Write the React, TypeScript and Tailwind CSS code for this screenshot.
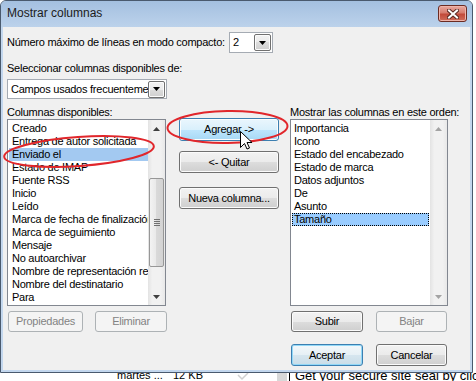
import React from "react";

const leftItems = [
  "Creado",
  "Entrega de autor solicitada",
  "Enviado el",
  "Estado de IMAP",
  "Fuente RSS",
  "Inicio",
  "Leído",
  "Marca de fecha de finalización",
  "Marca de seguimiento",
  "Mensaje",
  "No autoarchivar",
  "Nombre de representación remitente",
  "Nombre del destinatario",
  "Para",
];

const rightItems = [
  "Importancia",
  "Icono",
  "Estado del encabezado",
  "Estado de marca",
  "Datos adjuntos",
  "De",
  "Asunto",
  "Tamaño",
];

type Kind = "normal" | "disabled" | "hover" | "default";

const kinds: Record<Kind, string> = {
  normal:
    "border-[#707070] text-black bg-[linear-gradient(to_bottom,#f2f2f2_0%,#ebebeb_50%,#dddddd_50%,#cfcfcf_100%)] shadow-[inset_0_0_0_1px_#fbfbfb]",
  disabled: "border-[#adb2b5] text-[#838383] bg-[#f4f4f4]",
  hover:
    "border-[#3c7fb1] text-black bg-[linear-gradient(to_bottom,#eaf6fd_0%,#d9f0fc_50%,#bee6fd_50%,#a7d9f5_100%)] shadow-[inset_0_0_0_1px_#fcfcfc]",
  default:
    "border-[#3c7fb1] text-black bg-[linear-gradient(to_bottom,#f3f8fb_0%,#e6f0f5_50%,#d6e6ef_50%,#c9dde8_100%)] shadow-[inset_0_0_0_1px_#92d8f7]",
};

function Btn({
  kind = "normal",
  className = "",
  children,
}: {
  kind?: Kind;
  className?: string;
  children: React.ReactNode;
}) {
  return (
    <div
      className={`flex items-center justify-center rounded-[3px] border leading-[13px] ${kinds[kind]} ${className}`}
    >
      {children}
    </div>
  );
}

function Tri({ up, fill }: { up?: boolean; fill: string }) {
  return (
    <svg width="7" height="4" viewBox="0 0 7 4">
      <path d={up ? "M0 4 L3.5 0 L7 4 Z" : "M0 0 L7 0 L3.5 4 Z"} fill={fill} />
    </svg>
  );
}

function DropBtn() {
  return (
    <div className="flex h-[17px] w-[17px] items-center justify-center rounded-[2px] border border-[#707070] bg-[linear-gradient(to_bottom,#f2f2f2_0%,#ebebeb_50%,#dddddd_50%,#cfcfcf_100%)] shadow-[inset_0_0_0_1px_#fbfbfb]">
      <Tri fill="#000" />
    </div>
  );
}

function ScrollLeft() {
  return (
    <div className="flex w-[17px] flex-col bg-[linear-gradient(to_right,#e3e3e3,#f1f1f1_25%,#f1f1f1_75%,#e8e8e8)]">
      <div className="flex h-[17px] items-center justify-center">
        <Tri up fill="#3f3f3f" />
      </div>
      <div className="flex-1">
        <div className="mx-[1px] mt-[41px] flex h-[89px] items-center justify-center rounded-[2px] border border-[#979797] bg-[linear-gradient(to_right,#f3f3f3,#e8e8e8_50%,#d9d9d9_50%,#d3d3d3)]">
          <div className="flex flex-col gap-[1px]">
            <div className="h-[1px] w-[6px] bg-[#707070]" />
            <div className="h-[1px] w-[6px] bg-[#707070]" />
            <div className="h-[1px] w-[6px] bg-[#707070]" />
            <div className="h-[1px] w-[6px] bg-[#707070]" />
          </div>
        </div>
      </div>
      <div className="flex h-[17px] items-center justify-center">
        <Tri fill="#3f3f3f" />
      </div>
    </div>
  );
}

function ScrollRight() {
  return (
    <div className="flex w-[17px] flex-col bg-[linear-gradient(to_right,#e3e3e3,#f1f1f1_25%,#f1f1f1_75%,#e8e8e8)]">
      <div className="flex h-[17px] items-center justify-center">
        <Tri up fill="#a3a3a3" />
      </div>
      <div className="flex-1" />
      <div className="flex h-[17px] items-center justify-center">
        <Tri fill="#a3a3a3" />
      </div>
    </div>
  );
}

export default function App() {
  return (
    <div className="relative h-[381px] w-[476px] overflow-hidden bg-white font-['Liberation_Sans',Arial,sans-serif] text-[11px] text-black">
      {/* dialog */}
      <div className="flex h-[373px] w-[473px] flex-col overflow-hidden rounded-t-[6px] border border-[#4a5a6e] bg-[#c3d7ee]">
        <div className="flex h-[26px] items-start bg-[linear-gradient(to_bottom,#a4c0e0,#bcd2eb)]">
          <span className="flex-1 pl-[6px] pt-[4px] text-[12px] leading-[16px] text-[#1b1b1b]">
            Mostrar columnas
          </span>
          <div className="mr-[5px] mt-[4px] flex h-[17px] w-[29px] items-center justify-center rounded-[3px] border border-[#6b2b22] bg-[linear-gradient(to_bottom,#e8a99f_0%,#d77d6f_45%,#c24a3a_55%,#cf6d5b_100%)] shadow-[inset_0_0_0_1px_#eeb4aa]">
            <svg width="12" height="10" viewBox="0 0 12 10">
              <path d="M2 1.5 L10 8.5 M10 1.5 L2 8.5" stroke="#5a2a24" strokeWidth="4" strokeLinecap="square" />
              <path d="M2 1.5 L10 8.5 M10 1.5 L2 8.5" stroke="#ffffff" strokeWidth="2" strokeLinecap="square" />
            </svg>
          </div>
        </div>

        <div className="mx-[2px] mb-[2px] flex flex-1 flex-col bg-[#f0f0f0] pl-[4px] pt-[5px] tracking-[-0.25px]">
          <div className="flex h-[21px] items-center">
            <span className="w-[222px] leading-[13px]">Número máximo de líneas en modo compacto:</span>
            <div className="flex h-[21px] w-[44px] items-center border border-[#a5abb3] bg-white pl-[3px] pr-[1px]">
              <span className="flex-1 leading-[13px]">2</span>
              <DropBtn />
            </div>
          </div>

          <div className="mt-[9px] leading-[13px]">Seleccionar columnas disponibles de:</div>

          <div className="mt-[4px] flex h-[20px] w-[160px] items-center border border-[#a5abb3] bg-white pl-[3px] pr-[1px]">
            <span className="min-w-0 flex-1 overflow-hidden whitespace-nowrap leading-[13px]">
              Campos usados frecuentemente
            </span>
            <DropBtn />
          </div>

          <div className="mt-[7px] flex">
            {/* left column */}
            <div className="flex w-[159px] flex-col">
              <div className="h-[13px] leading-[13px]">Columnas disponibles:</div>
              <div className="flex h-[187px] border border-[#828790] bg-white">
                <div className="min-w-0 flex-1 pl-[1px] pt-[2px]">
                  {leftItems.map((t, i) => (
                    <div
                      key={t}
                      className={`h-[13px] overflow-hidden whitespace-nowrap pl-[3px] leading-[13px] ${i === 2 ? "bg-[#a3c9f1]" : ""}`}
                    >
                      {t}
                    </div>
                  ))}
                </div>
                <ScrollLeft />
              </div>
            </div>

            {/* middle buttons */}
            <div className="ml-[13px] flex w-[100px] flex-col pt-[12px]">
              <Btn kind="hover" className="h-[23px]">
                Agregar -&gt;
              </Btn>
              <Btn className="mt-[10px] h-[22px]">&lt;- Quitar</Btn>
              <Btn className="mt-[14px] h-[22px]">Nueva columna...</Btn>
            </div>

            {/* right column */}
            <div className="ml-[11px] flex w-[158px] flex-col">
              <div className="h-[13px] whitespace-nowrap leading-[13px]">
                Mostrar las columnas en este orden:
              </div>
              <div className="flex h-[187px] border border-[#828790] bg-white">
                <div className="min-w-0 flex-1 px-[1px] pt-[2px]">
                  {rightItems.map((t, i) => (
                    <div
                      key={t}
                      className={`h-[13px] overflow-hidden whitespace-nowrap leading-[11px] ${
                        i === rightItems.length - 1
                          ? "border border-dotted border-black bg-[#99ccff] pl-[1px]"
                          : "pl-[2px] leading-[13px]"
                      }`}
                    >
                      {t}
                    </div>
                  ))}
                </div>
                <ScrollRight />
              </div>
            </div>
          </div>

          <div className="mt-[5px] flex h-[21px]">
            <Btn kind="disabled" className="ml-[1px] w-[75px]">
              Propiedades
            </Btn>
            <Btn kind="disabled" className="ml-[12px] w-[72px]">
              Eliminar
            </Btn>
            <Btn className="ml-[124px] w-[72px]">Subir</Btn>
            <Btn kind="disabled" className="ml-[13px] w-[71px]">
              Bajar
            </Btn>
          </div>

          <div className="mt-[12px] flex h-[22px]">
            <Btn kind="default" className="ml-[284px] w-[72px]">
              Aceptar
            </Btn>
            <Btn className="ml-[13px] w-[71px]">Cancelar</Btn>
          </div>
        </div>
      </div>

      {/* page behind the dialog */}
      <div className="flex h-[8px] overflow-hidden bg-white">
        <span className="-mt-[4px] ml-[117px] w-[56px] shrink-0 whitespace-nowrap leading-[13px]">martes ...</span>
        <span className="-mt-[4px] w-[60px] shrink-0 whitespace-nowrap leading-[13px]">12 KB</span>
        <span className="ml-[4px] w-[12px] shrink-0">
          <svg width="12" height="8" viewBox="0 0 12 8">
            <path d="M1 2 L5 6 L11 0" stroke="#d0d0d0" strokeWidth="1.5" fill="none" />
          </svg>
        </span>
        <span className="ml-[28px] w-[10px] shrink-0 bg-[#d8d8d8]" />
        <span className="ml-[2px] w-[1px] shrink-0 bg-black" />
        <span className="-mt-[5px] ml-[5px] shrink-0 whitespace-nowrap text-[13px] leading-[15px]">
          Get your secure site seal by click
        </span>
      </div>

      {/* annotations drawn over the screenshot */}
      <svg className="pointer-events-none absolute left-0 top-0" width="476" height="381" viewBox="0 0 476 381">
        <ellipse cx="79" cy="151.5" rx="75" ry="14.5" transform="rotate(-4 79 151.5)" fill="none" stroke="#e1262b" strokeWidth="2" />
        <ellipse cx="227.5" cy="127" rx="60" ry="16" transform="rotate(-1 227.5 127)" fill="none" stroke="#e1262b" strokeWidth="2" />
        <path
          d="M240.5 131.5 L240.5 147.5 L244.5 143.5 L247 149 L249.5 148 L247 142.5 L252 142.5 Z"
          fill="#ffffff"
          stroke="#000000"
          strokeWidth="1"
          strokeLinejoin="miter"
        />
      </svg>
    </div>
  );
}
